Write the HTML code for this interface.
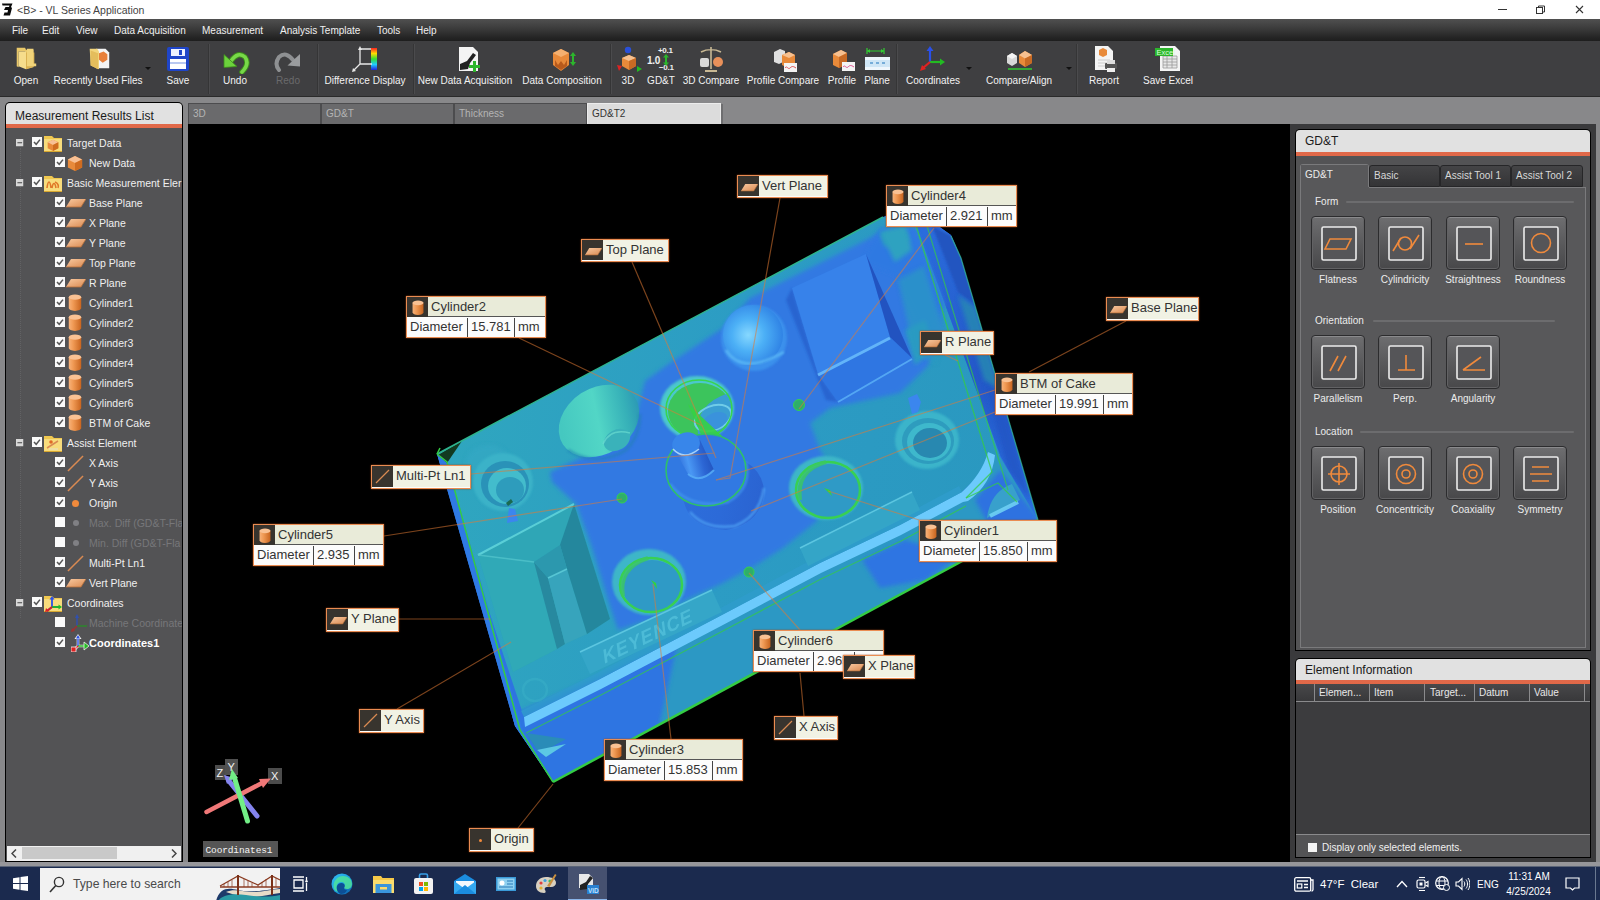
<!DOCTYPE html>
<html>
<head>
<meta charset="utf-8">
<title>VL Series Application</title>
<style>
*{box-sizing:border-box;margin:0;padding:0}
html,body{width:1600px;height:900px;overflow:hidden;background:#88888a;font-family:"Liberation Sans",sans-serif;}
.abs{position:absolute}
#titlebar{left:0;top:0;width:1600px;height:19px;background:#fff;color:#444;font-size:10.5px;line-height:20px;}
#menubar{left:0;top:19px;width:1600px;height:22px;background:linear-gradient(#505050 0%,#3a3a3a 45%,#242424 85%,#1e1e1e 100%);color:#f0f0f0;font-size:10px;line-height:24px;}
#menubar span{position:absolute;top:0;white-space:nowrap}
#toolbar{left:0;top:41px;width:1600px;height:56px;background:#3f3f41;border-bottom:1px solid #2a2a2a;}
.tb{position:absolute;top:33px;color:#f2f2f2;font-size:10px;white-space:nowrap;transform:translateX(-50%);line-height:13px;}
.tsep{position:absolute;top:3px;width:2px;height:50px;background:#353536;border-right:1px solid #4b4b4d;}
.ico{position:absolute;top:5px;width:26px;height:26px;}
/* panels */
.phead{background:#e1e1e1;border-bottom:4px solid #e8705a;border-image:linear-gradient(#f0a898,#e8745a 40%,#e06848) 1;color:#1a1a1a;font-size:12px;}
.trow{position:absolute;font-size:10.5px;line-height:14px;white-space:nowrap;}

.glab{font-size:10px;color:#ececec;white-space:nowrap;line-height:13px}
.gtab{position:absolute;background:linear-gradient(#444446,#343436);border:1px solid #262628;color:#d8d8d8;font-size:10px;line-height:20px;padding-left:4px;border-radius:3px 3px 0 0;white-space:nowrap}
.gtab.sel{background:#58585a;border:1px solid #7a7a7c;border-bottom:none;color:transparent}
.gbtn{position:absolute;width:54px;height:54px;border-radius:4px;background:linear-gradient(#6e6e70 0%,#5a5a5c 50%,#48484a 100%);border:1px solid #2c2c2e;box-shadow:inset 0 1px 0 #8a8a8c, inset 0 0 0 1px #626264}
.tkt{color:#fff;white-space:nowrap;line-height:13px}

.lb{position:absolute;border:1.800px solid #ea8c52;background:#fdfdfb;font-size:13px;color:#333;overflow:hidden;white-space:nowrap;box-shadow:0 0 1.500px #a04818}
.lbi{position:absolute;left:0;top:0;width:21px;background:#38342e}
.lbt{position:absolute;left:21px;top:0;right:0;background:#f1f2e4;padding-left:3px}
.lbr{position:absolute;left:0;top:21px;height:19px;line-height:18px;background:#fcfcfc}
.lbr span{position:absolute;top:0}
.lbr i{position:absolute;top:0;width:1px;height:19px;background:#444}
/* tabs */
.vtab{position:absolute;top:103px;height:21px;background:#6a6a6c;border:1px solid #4c4c4e;border-bottom:none;color:#b4b4b4;font-size:10px;line-height:20px;padding-left:4px;}
#viewport{left:188px;top:124px;width:1102px;height:738px;background:#000;overflow:hidden;}
/* taskbar */
#taskbar{left:0;top:866px;width:1600px;height:34px;background:#1b2a4e;border-top:1px solid #5a6478}
</style>
</head>
<body>

<svg width="0" height="0" style="position:absolute">
<defs>
<linearGradient id="gcyl" x1="0" y1="0" x2="1" y2="0"><stop offset="0" stop-color="#f7b27a"/><stop offset=".35" stop-color="#f09a55"/><stop offset="1" stop-color="#c8641e"/></linearGradient>
<linearGradient id="gpl" x1="0" y1="0" x2="1" y2="1"><stop offset="0" stop-color="#f9c9a0"/><stop offset="1" stop-color="#d98a52"/></linearGradient>
<symbol id="i-cyl" viewBox="0 0 18 20"><path d="M2 4v12c0 2 3 3.500 7 3.500s7-1.500 7-3.500V4z" fill="url(#gcyl)"/><ellipse cx="9" cy="4" rx="7" ry="3" fill="#f9c193"/></symbol>
<symbol id="i-plane" viewBox="0 0 20 10"><path d="M5 1h15l-5 8H0z" fill="url(#gpl)"/><path d="M0 9h15l5-8" stroke="#b8703a" stroke-width="0.8" fill="none"/></symbol>
<symbol id="i-line" viewBox="0 0 18 18"><path d="M1 17L17 1" stroke="#d98a52" stroke-width="1.600"/></symbol>
<symbol id="i-cube" viewBox="0 0 18 18"><path d="M1 5l8-4 8 4v9l-8 4-8-4z" fill="#e88a3a"/><path d="M1 5l8 4 8-4-8-4z" fill="#f8c094"/><path d="M9 9v9l8-4V5z" fill="#cf6c20"/></symbol>
<symbol id="i-folder" viewBox="0 0 20 20"><path d="M1 3h8l2 2h8v14H1z" fill="#f0c850"/><path d="M1 6h18v13H1z" fill="#f8dc7c"/><path d="M1 18h18v1H1z" fill="#d8a830"/></symbol>
<symbol id="i-check" viewBox="0 0 10 10"><rect x="0" y="0" width="10" height="10" fill="#fafafa"/><path d="M2 5l2.200 2.300L8 2.600" stroke="#555" stroke-width="1.500" fill="none"/></symbol>
<symbol id="i-uncheck" viewBox="0 0 10 10"><rect x="0" y="0" width="10" height="10" fill="#fafafa"/></symbol>
<symbol id="i-exp" viewBox="0 0 8 8"><rect x="0" y="0" width="8" height="8" fill="#d8d8d8"/><path d="M1.500 4h5" stroke="#444" stroke-width="1.200"/></symbol>
</defs>
</svg>
<!-- TITLE BAR -->
<div id="titlebar" class="abs"><svg class="abs" style="left:1px;top:2px;width:13px;height:15px" viewBox="0 0 13 15"><path d="M1 1.500h10.500L10 5 11 6 9 13.500H2.500L3.500 10.500H6.500L7 8H3L4.500 5 8 5 8.500 3.500H1.500z" fill="#0a0a0a"/></svg><span class="abs" style="left:17px;top:0">&lt;B&gt; - VL Series Application</span>
<svg class="abs" style="left:1496px;top:4px;width:90px;height:12px" viewBox="0 0 90 12"><path d="M2 5.500h9" stroke="#333" stroke-width="1"/><rect x="40.500" y="3.500" width="6" height="6" stroke="#333" stroke-width="1" fill="none"/><path d="M42.500 3.500v-1.500h6v6h-2" stroke="#333" stroke-width="1" fill="none"/><path d="M80 2l7 7M87 2l-7 7" stroke="#333" stroke-width="1.100"/></svg></div>
<!-- MENU BAR -->
<div id="menubar" class="abs">
<span style="left:12px">File</span><span style="left:42px">Edit</span><span style="left:76px">View</span><span style="left:114px">Data Acquisition</span><span style="left:202px">Measurement</span><span style="left:280px">Analysis Template</span><span style="left:377px">Tools</span><span style="left:416px">Help</span>
</div>
<!-- TOOLBAR -->
<div id="toolbar" class="abs">
<!-- Open -->
<svg class="ico" style="left:13px;top:4px" viewBox="0 0 26 28"><path d="M3 3h9l1 2h8v19l-8 2V8l-1-1H5v17l-2-1z" fill="#e9c86a"/><path d="M5 7h8v19l-8-3z" fill="#f6dd8c"/><path d="M13 8h9v15l-9 3z" fill="#d9b050"/><path d="M14 4h7v16h3v3h-10z" fill="#f1d47a"/></svg>
<div class="tb" style="left:26px">Open</div>
<!-- Recently used -->
<svg class="ico" style="left:86px;top:4px" viewBox="0 0 26 28"><path d="M10 4h10l4 4v17H10z" fill="#f4f4f4"/><path d="M13 9l5-2 4 3v6l-5 3-4-3z" fill="#e8803a"/><path d="M3 4h8l2 3v19l-9-4z" fill="#f2d57c"/><path d="M4 6l8 3v17l-8-4z" fill="#e4bd5c"/></svg>
<div class="tb" style="left:98px">Recently Used Files</div>
<div class="abs" style="left:145px;top:26px;width:0;height:0;border:3px solid transparent;border-top:3px solid #111;"></div>
<!-- Save -->
<svg class="ico" style="left:166px;top:5px;width:24px;height:26px" viewBox="0 0 24 26"><rect x="1" y="1" width="22" height="24" rx="2" fill="#1f45c8"/><rect x="5" y="3" width="14" height="7" fill="#eef2ff"/><rect x="13" y="4" width="3" height="5" fill="#1f45c8"/><rect x="4" y="13" width="16" height="10" fill="#ffffff"/><rect x="4" y="16" width="16" height="2" fill="#b9c8f0"/></svg>
<div class="tb" style="left:178px">Save</div>
<div class="tsep" style="left:208px"></div>
<!-- Undo -->
<svg class="abs" style="left:220px;top:9px;width:32px;height:24px" viewBox="220 50 32 24"><path d="M231 61Q238 51 245 57Q250 64 242 72" stroke="#3c8a1c" stroke-width="5.500" fill="none" stroke-linecap="round"/><path d="M231 61Q238 51 245 57Q250 64 242 72" stroke="#78d848" stroke-width="3.600" fill="none" stroke-linecap="round"/><path d="M224 54.500L224 67.500L237 66.500Z" fill="#6cd23c" stroke="#3c8a1c" stroke-width=".800"/></svg>
<div class="tb" style="left:235px">Undo</div>
<!-- Redo -->
<svg class="abs" style="left:272px;top:9px;width:32px;height:24px" viewBox="272 50 32 24"><path d="M293 60Q286 51 279 57Q274 64 279 70" stroke="#8e9092" stroke-width="4" fill="none" stroke-linecap="round"/><path d="M300 54L300 66.500L287.500 65.500Z" fill="#9a9c9e"/></svg>
<div class="tb" style="left:288px;color:#6a6a6c">Redo</div>
<div class="tsep" style="left:317px"></div>
<!-- Difference display -->
<svg class="ico" style="left:352px;top:5px;width:28px;height:28px" viewBox="0 0 28 28"><defs><linearGradient id="rb" x1="0" y1="0" x2="0" y2="1"><stop offset="0" stop-color="#f22"/><stop offset=".25" stop-color="#fd0"/><stop offset=".5" stop-color="#3d3"/><stop offset=".75" stop-color="#2cf"/><stop offset="1" stop-color="#22d"/></linearGradient></defs><rect x="19" y="2" width="6" height="22" fill="url(#rb)"/><path d="M8 3v15h12M8 18l-6 6M8 3h11" stroke="#e8e8e8" stroke-width="1.3" fill="none"/><path d="M8 0l-2 4h4zM0 26l1-4 3 3z" fill="#e8e8e8"/></svg>
<div class="tb" style="left:365px">Difference Display</div>
<div class="tsep" style="left:413px"></div>
<!-- New data acquisition -->
<svg class="ico" style="left:455px;top:5px;width:28px;height:28px" viewBox="0 0 28 28"><path d="M4 1h14l5 5v19H4z" fill="#f4f4f4"/><path d="M5 18l7-3 6-8 3 2-6 8-2 6-8 1z" fill="#222"/><path d="M17 17h4v-4h3v4h4v3h-4v4h-3v-4h-4z" fill="#2cb52c" transform="translate(-3,2)"/></svg>
<div class="tb" style="left:465px">New Data Acquisition</div>
<!-- Data composition -->
<svg class="ico" style="left:548px;top:5px;width:30px;height:28px" viewBox="0 0 30 28"><path d="M5 7l8-4 8 4v12l-8 6-8-6z" fill="#e88a3a"/><path d="M5 7l8 4 8-4-8-4z" fill="#f4b070"/><path d="M7 14l3 5 3-4 3 4 3-5v6l-6 4-6-4z" fill="#b85a1c"/><path d="M25 6l3 4h-2v6h2l-3 4-3-4h2v-6h-2z" fill="#2cb52c"/></svg>
<div class="tb" style="left:562px">Data Composition</div>
<div class="tsep" style="left:610px"></div>
<!-- 3D -->
<svg class="ico" style="left:615px;top:5px;width:28px;height:28px" viewBox="0 0 28 28"><path d="M7 12l7-3 7 3v8l-7 4-7-4z" fill="#e88a3a"/><path d="M7 12l7 3 7-3-7-3z" fill="#f6c090"/><path d="M14 15v9l7-4v-8z" fill="#c86a24"/><circle cx="13" cy="4" r="3.2" fill="#2a50d8"/><path d="M2 19l5 1-3 5z" fill="#d22"/><path d="M22 20l5 3-5 3z" fill="#2b2"/></svg>
<div class="tb" style="left:628px">3D</div>
<!-- GD&T -->
<div class="abs" style="left:647px;top:14px;color:#f0f0f0;font-size:10px;font-weight:bold;letter-spacing:-0.3px">1.0</div>
<div class="abs" style="left:658px;top:5px;color:#f0f0f0;font-size:8px;font-weight:bold;letter-spacing:-0.3px">+0.1</div>
<div class="abs" style="left:659px;top:22px;color:#f0f0f0;font-size:8px;font-weight:bold;letter-spacing:-0.3px">&minus;0.1</div>
<svg class="abs" style="left:662px;top:13px;width:8px;height:12px" viewBox="0 0 8 12"><path d="M4 0l3 3.5H5v5h2L4 12 1 8.500h2v-5H1z" fill="#2cb52c"/></svg>
<div class="tb" style="left:661px">GD&amp;T</div>
<!-- 3D Compare -->
<svg class="ico" style="left:697px;top:5px;width:28px;height:28px" viewBox="0 0 28 28"><path d="M14 1v22M4 6c6-3 14-3 20 0" stroke="#c8b894" stroke-width="1.6" fill="none"/><path d="M8 24h12v2H8z" fill="#c8b894"/><rect x="3" y="12" width="9" height="9" rx="2" fill="#d8d8d8"/><circle cx="21" cy="16" r="5" fill="#e8905a"/></svg>
<div class="tb" style="left:711px">3D Compare</div>
<!-- Profile Compare -->
<svg class="ico" style="left:771px;top:5px;width:28px;height:28px" viewBox="0 0 28 28"><path d="M3 6l6-3 5 2v10l-6 3-5-2z" fill="#e0e0e0"/><path d="M11 9l7-3 6 3v10l-7 3-6-3z" fill="#e88a3a"/><path d="M11 9l7 3 6-3-6-3z" fill="#f6c090"/><rect x="13" y="17" width="13" height="9" fill="#f4f4f4"/><path d="M14 22c2-3 3 2 5 0s3-2 6 0" stroke="#e05050" stroke-width="1" fill="none"/></svg>
<div class="tb" style="left:783px">Profile Compare</div>
<!-- Profile -->
<svg class="ico" style="left:829px;top:5px;width:28px;height:28px" viewBox="0 0 28 28"><path d="M4 8l8-4 6 3v11l-8 4-6-3z" fill="#e88a3a"/><path d="M4 8l6 3 8-4-6-3z" fill="#f6c090"/><path d="M10 11v11l8-4V7z" fill="#c86a24"/><rect x="13" y="16" width="13" height="9" fill="#f4f4f4"/><path d="M14 21c2-3 3 2 5 0s3-2 6 0" stroke="#e05090" stroke-width="1" fill="none"/></svg>
<div class="tb" style="left:842px">Profile</div>
<!-- Plane -->
<svg class="ico" style="left:864px;top:5px;width:28px;height:28px" viewBox="0 0 28 28"><path d="M3 2v6M20 2v6M3 5h17" stroke="#3c3" stroke-width="1.2" fill="none"/><path d="M3 5l3-2v4zM20 5l-3-2v4z" fill="#3c3"/><rect x="1" y="11" width="25" height="13" fill="#cfe6f6"/><rect x="1" y="11" width="25" height="3" fill="#eef6fc"/><rect x="1" y="21" width="25" height="3" fill="#eef6fc"/><path d="M6 17h3M12 17h3M18 17h3" stroke="#5a9ad0" stroke-width="1.5"/></svg>
<div class="tb" style="left:877px">Plane</div>
<div class="tsep" style="left:896px"></div>
<!-- Coordinates -->
<svg class="ico" style="left:918px;top:5px;width:28px;height:28px" viewBox="0 0 28 28"><path d="M12 4v12" stroke="#2a50e8" stroke-width="2.2"/><path d="M12 0l-3.500 5h7z" fill="#2a50e8"/><path d="M12 16h10" stroke="#2b2" stroke-width="2.2"/><path d="M27 16l-5-3.500v7z" fill="#2b2"/><path d="M12 16l-7 6" stroke="#d22" stroke-width="2.2"/><path d="M2 25l2-6 4 4z" fill="#d22"/></svg>
<div class="tb" style="left:933px">Coordinates</div>
<div class="abs" style="left:966px;top:26px;width:0;height:0;border:3px solid transparent;border-top:3px solid #111;"></div>
<!-- Compare/Align -->
<svg class="ico" style="left:1006px;top:8px;width:28px;height:24px" viewBox="0 0 28 24"><path d="M1 7l5-3 5 3v7l-5 3-5-3z" fill="#d8d8d8"/><path d="M1 7l5 3 5-3-5-3z" fill="#f4f4f4"/><path d="M13 6l6-4 7 4v8l-7 4-6-4z" fill="#e88a3a"/><path d="M13 6l6 3.500L26 6l-7-4z" fill="#f6c090"/><path d="M19 9.500V18l7-4V6z" fill="#c86a24"/><path d="M2 20h24" stroke="#3c3" stroke-width="1.5"/></svg>
<div class="tb" style="left:1019px">Compare/Align</div>
<div class="abs" style="left:1066px;top:26px;width:0;height:0;border:3px solid transparent;border-top:3px solid #111;"></div>
<div class="tsep" style="left:1076px"></div>
<!-- Report -->
<svg class="ico" style="left:1092px;top:4px;width:28px;height:28px" viewBox="0 0 28 28"><path d="M3 1h13l5 5v19H3z" fill="#f4f4f4"/><path d="M7 5l4-2 4 2v5l-4 2-4-2z" fill="#e88a3a"/><path d="M6 15h12M6 18h12M6 21h8" stroke="#ccc" stroke-width="1"/><rect x="13" y="18" width="12" height="6" rx="1" fill="#555"/><rect x="15" y="15" width="8" height="4" fill="#ddd"/><rect x="15" y="23" width="8" height="4" fill="#eee"/></svg>
<div class="tb" style="left:1104px">Report</div>
<!-- Save Excel -->
<svg class="ico" style="left:1154px;top:4px;width:30px;height:28px" viewBox="0 0 30 28"><path d="M6 1h15l5 5v20H6z" fill="#f4f4f4"/><path d="M9 11h14v12H9zM9 14h14M9 17h14M9 20h14M13 11v12M18 11v12" stroke="#999" stroke-width="0.8" fill="#e8e8e8"/><rect x="1" y="3" width="18" height="8" fill="#2cb52c"/><text x="2.500" y="10" font-size="7.500" font-family="Liberation Sans" fill="#d8ffd8">Excel</text></svg>
<div class="tb" style="left:1168px">Save Excel</div>
</div>
<!-- LEFT PANEL -->
<div id="leftpanel" class="abs" style="left:5px;top:102px;width:179px;height:762px;">
<div class="abs" style="left:0;top:0;width:178px;height:760px;background:#000;border-radius:5px 5px 0 0;"></div>
<div class="abs phead" style="left:1px;top:1px;width:176px;height:25px;border-radius:4px 4px 0 0;line-height:27px;padding-left:9px;">Measurement Results List</div>
<div class="abs" style="left:1px;top:26px;width:176px;height:733px;background:#535355;overflow:hidden">
<div class="abs" style="left:14px;top:20px;width:0;height:470px;border-left:1px dotted #626264"></div>
<div id="tree" class="abs" style="left:-1px;top:-25px;width:178px;height:760px;">
<svg class="abs" style="left:11px;top:36px;width:7.500px;height:7.500px"><use href="#i-exp"/></svg>
<svg class="abs" style="left:27px;top:34px;width:10px;height:10px"><use href="#i-check"/></svg>
<svg class="abs" style="left:38px;top:30px;width:20px;height:20px"><use href="#i-folder"/></svg>
<svg class="abs" style="left:42px;top:36px;width:12px;height:12px"><use href="#i-cube"/></svg>
<div class="trow" style="left:62px;top:33px;color:#f0f0f0;">Target Data</div>
<svg class="abs" style="left:50px;top:54px;width:10px;height:10px"><use href="#i-check"/></svg>
<svg class="abs" style="left:62px;top:52px;width:16px;height:16px"><use href="#i-cube"/></svg>
<div class="trow" style="left:84px;top:53px;color:#f0f0f0;">New Data</div>
<svg class="abs" style="left:11px;top:76px;width:7.500px;height:7.500px"><use href="#i-exp"/></svg>
<svg class="abs" style="left:27px;top:74px;width:10px;height:10px"><use href="#i-check"/></svg>
<svg class="abs" style="left:38px;top:70px;width:20px;height:20px"><use href="#i-folder"/></svg>
<svg class="abs" style="left:41px;top:76px;width:14px;height:11px" viewBox="0 0 14 11"><path d="M1 9c1-8 3-8 4 0M6 9c1-6 3-6 4 0M9 3c3 1 4 4 3 6" stroke="#e07828" stroke-width="1.600" fill="none"/></svg>
<div class="trow" style="left:62px;top:73px;color:#f0f0f0;">Basic Measurement Eler</div>
<svg class="abs" style="left:50px;top:94px;width:10px;height:10px"><use href="#i-check"/></svg>
<svg class="abs" style="left:61px;top:95px;width:20px;height:10px"><use href="#i-plane"/></svg>
<div class="trow" style="left:84px;top:93px;color:#f0f0f0;">Base Plane</div>
<svg class="abs" style="left:50px;top:114px;width:10px;height:10px"><use href="#i-check"/></svg>
<svg class="abs" style="left:61px;top:115px;width:20px;height:10px"><use href="#i-plane"/></svg>
<div class="trow" style="left:84px;top:113px;color:#f0f0f0;">X Plane</div>
<svg class="abs" style="left:50px;top:134px;width:10px;height:10px"><use href="#i-check"/></svg>
<svg class="abs" style="left:61px;top:135px;width:20px;height:10px"><use href="#i-plane"/></svg>
<div class="trow" style="left:84px;top:133px;color:#f0f0f0;">Y Plane</div>
<svg class="abs" style="left:50px;top:154px;width:10px;height:10px"><use href="#i-check"/></svg>
<svg class="abs" style="left:61px;top:155px;width:20px;height:10px"><use href="#i-plane"/></svg>
<div class="trow" style="left:84px;top:153px;color:#f0f0f0;">Top Plane</div>
<svg class="abs" style="left:50px;top:174px;width:10px;height:10px"><use href="#i-check"/></svg>
<svg class="abs" style="left:61px;top:175px;width:20px;height:10px"><use href="#i-plane"/></svg>
<div class="trow" style="left:84px;top:173px;color:#f0f0f0;">R Plane</div>
<svg class="abs" style="left:50px;top:194px;width:10px;height:10px"><use href="#i-check"/></svg>
<svg class="abs" style="left:62px;top:190px;width:16px;height:19px" preserveAspectRatio="none"><use href="#i-cyl" width="16" height="19" preserveAspectRatio="none"/></svg>
<div class="trow" style="left:84px;top:193px;color:#f0f0f0;">Cylinder1</div>
<svg class="abs" style="left:50px;top:214px;width:10px;height:10px"><use href="#i-check"/></svg>
<svg class="abs" style="left:62px;top:210px;width:16px;height:19px" preserveAspectRatio="none"><use href="#i-cyl" width="16" height="19" preserveAspectRatio="none"/></svg>
<div class="trow" style="left:84px;top:213px;color:#f0f0f0;">Cylinder2</div>
<svg class="abs" style="left:50px;top:234px;width:10px;height:10px"><use href="#i-check"/></svg>
<svg class="abs" style="left:62px;top:230px;width:16px;height:19px" preserveAspectRatio="none"><use href="#i-cyl" width="16" height="19" preserveAspectRatio="none"/></svg>
<div class="trow" style="left:84px;top:233px;color:#f0f0f0;">Cylinder3</div>
<svg class="abs" style="left:50px;top:254px;width:10px;height:10px"><use href="#i-check"/></svg>
<svg class="abs" style="left:62px;top:250px;width:16px;height:19px" preserveAspectRatio="none"><use href="#i-cyl" width="16" height="19" preserveAspectRatio="none"/></svg>
<div class="trow" style="left:84px;top:253px;color:#f0f0f0;">Cylinder4</div>
<svg class="abs" style="left:50px;top:274px;width:10px;height:10px"><use href="#i-check"/></svg>
<svg class="abs" style="left:62px;top:270px;width:16px;height:19px" preserveAspectRatio="none"><use href="#i-cyl" width="16" height="19" preserveAspectRatio="none"/></svg>
<div class="trow" style="left:84px;top:273px;color:#f0f0f0;">Cylinder5</div>
<svg class="abs" style="left:50px;top:294px;width:10px;height:10px"><use href="#i-check"/></svg>
<svg class="abs" style="left:62px;top:290px;width:16px;height:19px" preserveAspectRatio="none"><use href="#i-cyl" width="16" height="19" preserveAspectRatio="none"/></svg>
<div class="trow" style="left:84px;top:293px;color:#f0f0f0;">Cylinder6</div>
<svg class="abs" style="left:50px;top:314px;width:10px;height:10px"><use href="#i-check"/></svg>
<svg class="abs" style="left:62px;top:310px;width:16px;height:19px" preserveAspectRatio="none"><use href="#i-cyl" width="16" height="19" preserveAspectRatio="none"/></svg>
<div class="trow" style="left:84px;top:313px;color:#f0f0f0;">BTM of Cake</div>
<svg class="abs" style="left:11px;top:336px;width:7.500px;height:7.500px"><use href="#i-exp"/></svg>
<svg class="abs" style="left:27px;top:334px;width:10px;height:10px"><use href="#i-check"/></svg>
<svg class="abs" style="left:38px;top:330px;width:20px;height:20px"><use href="#i-folder"/></svg>
<svg class="abs" style="left:41px;top:335px;width:14px;height:12px" viewBox="0 0 14 12"><path d="M1 10L12 3" stroke="#d98a52" stroke-width="1.500"/><circle cx="5" cy="4" r="1.800" fill="#e06a28"/><path d="M3 11h9" stroke="#e8e0c0" stroke-width="1.200"/></svg>
<div class="trow" style="left:62px;top:333px;color:#f0f0f0;">Assist Element</div>
<svg class="abs" style="left:50px;top:354px;width:10px;height:10px"><use href="#i-check"/></svg>
<svg class="abs" style="left:62px;top:352px;width:17px;height:17px"><use href="#i-line"/></svg>
<div class="trow" style="left:84px;top:353px;color:#f0f0f0;">X Axis</div>
<svg class="abs" style="left:50px;top:374px;width:10px;height:10px"><use href="#i-check"/></svg>
<svg class="abs" style="left:62px;top:372px;width:17px;height:17px"><use href="#i-line"/></svg>
<div class="trow" style="left:84px;top:373px;color:#f0f0f0;">Y Axis</div>
<svg class="abs" style="left:50px;top:394px;width:10px;height:10px"><use href="#i-check"/></svg>
<div class="abs" style="left:67px;top:397px;width:7px;height:7px;border-radius:50%;background:#f08a3c"></div>
<div class="trow" style="left:84px;top:393px;color:#f0f0f0;">Origin</div>
<svg class="abs" style="left:50px;top:414px;width:10px;height:10px"><use href="#i-uncheck"/></svg>
<div class="abs" style="left:68px;top:417px;width:6px;height:6px;border-radius:50%;background:#808084"></div>
<div class="trow" style="left:84px;top:413px;color:#77777a;">Max. Diff (GD&amp;T-Fla</div>
<svg class="abs" style="left:50px;top:434px;width:10px;height:10px"><use href="#i-uncheck"/></svg>
<div class="abs" style="left:68px;top:437px;width:6px;height:6px;border-radius:50%;background:#808084"></div>
<div class="trow" style="left:84px;top:433px;color:#77777a;">Min. Diff (GD&amp;T-Fla</div>
<svg class="abs" style="left:50px;top:454px;width:10px;height:10px"><use href="#i-check"/></svg>
<svg class="abs" style="left:62px;top:452px;width:17px;height:17px"><use href="#i-line"/></svg>
<div class="trow" style="left:84px;top:453px;color:#f0f0f0;">Multi-Pt Ln1</div>
<svg class="abs" style="left:50px;top:474px;width:10px;height:10px"><use href="#i-check"/></svg>
<svg class="abs" style="left:61px;top:475px;width:20px;height:10px"><use href="#i-plane"/></svg>
<div class="trow" style="left:84px;top:473px;color:#f0f0f0;">Vert Plane</div>
<svg class="abs" style="left:11px;top:496px;width:7.500px;height:7.500px"><use href="#i-exp"/></svg>
<svg class="abs" style="left:27px;top:494px;width:10px;height:10px"><use href="#i-check"/></svg>
<svg class="abs" style="left:38px;top:490px;width:20px;height:20px"><use href="#i-folder"/></svg>
<svg class="abs" style="left:40px;top:493px;width:17px;height:16px" viewBox="0 0 17 16"><path d="M7 2v9h8M7 11l-5 4" stroke-width="1.800" fill="none" stroke="#2a50e8"/><path d="M7 11h8" stroke="#2b2" stroke-width="1.800"/><path d="M7 11l-5 4" stroke="#d22" stroke-width="1.800"/><path d="M7 0l-2.500 3.500h5z" fill="#2a50e8"/><path d="M17 11l-3.500-2.500v5z" fill="#2b2"/><path d="M0 16l1-4 3 3z" fill="#d22"/></svg>
<div class="trow" style="left:62px;top:493px;color:#f0f0f0;">Coordinates</div>
<svg class="abs" style="left:50px;top:514px;width:10px;height:10px"><use href="#i-uncheck"/></svg>
<svg class="abs" style="left:66px;top:511px;width:18px;height:18px" viewBox="0 0 18 18"><path d="M6 2v10" stroke="#3050b0" stroke-width="1.400"/><path d="M6 0L4 4h4z" fill="#3050b0"/><path d="M6 12h10" stroke="#2a8a2a" stroke-width="1.400"/><path d="M6 12l-4 4" stroke="#a03030" stroke-width="1.400"/><path d="M0 18l1-4 3 3z" fill="#a03030"/></svg>
<div class="trow" style="left:84px;top:513px;color:#77777a;">Machine Coordinate</div>
<svg class="abs" style="left:50px;top:534px;width:10px;height:10px"><use href="#i-check"/></svg>
<svg class="abs" style="left:66px;top:531px;width:19px;height:18px" viewBox="0 0 19 18"><path d="M7 4v8h6M7 12l-4 4" stroke="#f0f0f0" stroke-width="2.600" fill="none"/><path d="M7 0L3.500 5h7z" fill="#f0f0f0"/><path d="M7 5v7" stroke="#2a50e8" stroke-width="1.400"/><path d="M7 1L5 4.500h4z" fill="#2a50e8"/><path d="M7 12h7" stroke="#2b2" stroke-width="1.400"/><path d="M18 12l-5-4v8z" fill="#2b2" stroke="#f0f0f0" stroke-width="0.800"/><path d="M7 12l-4 4" stroke="#d22" stroke-width="1.400"/><rect x="0" y="13" width="5" height="5" fill="#d22" stroke="#f0f0f0" stroke-width="0.800"/></svg>
<div class="trow" style="left:84px;top:533px;color:#ffffff;font-weight:bold;font-size:11px">Coordinates1</div>
</div>
<div class="abs" style="left:1px;top:718px;width:174px;height:15px;background:#f0f0f0;">
<div class="abs" style="left:15px;top:1px;width:95px;height:12px;background:#c9c9c9"></div>
<svg class="abs" style="left:4px;top:3px;width:6px;height:9px" viewBox="0 0 6 9"><path d="M5 0.500L1 4.500l4 4" stroke="#444" stroke-width="1.500" fill="none"/></svg>
<svg class="abs" style="left:164px;top:3px;width:6px;height:9px" viewBox="0 0 6 9"><path d="M1 0.500l4 4-4 4" stroke="#444" stroke-width="1.500" fill="none"/></svg>
</div>
</div>
</div>
<!-- VIEW TABS -->
<div class="vtab" style="left:188px;width:133px">3D</div>
<div class="vtab" style="left:321px;width:133px">GD&amp;T</div>
<div class="vtab" style="left:454px;width:133px">Thickness</div>
<div class="vtab" style="left:587px;width:134px;background:#dcdcdc;color:#333;border-color:#ececec;height:22px">GD&amp;T2</div><div class="abs" style="left:721px;top:104px;width:2px;height:20px;background:#6e6e70"></div>

<!-- VIEWPORT -->
<div id="viewport" class="abs"><!--MODEL--><svg class="abs" style="left:0;top:0;width:1102px;height:738px" viewBox="188 124 1102 738">
<defs>
<linearGradient id="mTop" gradientUnits="userSpaceOnUse" x1="450" y1="450" x2="1000" y2="520"><stop offset="0" stop-color="#2fa6bf"/><stop offset=".5" stop-color="#2c9cc4"/><stop offset="1" stop-color="#2a98c0"/></linearGradient>
<radialGradient id="mCone" cx=".45" cy=".35" r=".7"><stop offset="0" stop-color="#5ad8c4"/><stop offset=".6" stop-color="#38b8b4"/><stop offset="1" stop-color="#2a9cb8"/></radialGradient>
<radialGradient id="mDome" cx=".42" cy=".5" r=".6"><stop offset="0" stop-color="#86d8ff"/><stop offset=".45" stop-color="#4cb0f6"/><stop offset="1" stop-color="#2e80e4"/></radialGradient>
<linearGradient id="mPin" x1="0" y1="0" x2="1" y2="0"><stop offset="0" stop-color="#2a66d4"/><stop offset=".5" stop-color="#3c8cf0"/><stop offset="1" stop-color="#2458c4"/></linearGradient>
<linearGradient id="mRight" gradientUnits="userSpaceOnUse" x1="930" y1="230" x2="1030" y2="520"><stop offset="0" stop-color="#2a6cdc"/><stop offset=".5" stop-color="#2458c8"/><stop offset="1" stop-color="#2c70e0"/></linearGradient>
<filter id="bl2"><feGaussianBlur stdDeviation="2"/></filter>
<filter id="bl4"><feGaussianBlur stdDeviation="4"/></filter>
<filter id="bl1"><feGaussianBlur stdDeviation="0.8"/></filter>
<clipPath id="cTop"><path d="M437 454L883 217L915 222L1028 505L500 712Z"/></clipPath>
<clipPath id="cSil"><path d="M437 454L883 217Q905 206 930 220L951 235L961 258L1038 520L553 782L515 726Z"/></clipPath>
</defs>
<!-- silhouette -->
<path d="M437 454L883 217Q905 206 930 220L951 235L961 258L1038 520L553 782L515 726Z" fill="#2e74e0"/>
<g clip-path="url(#cSil)">
<!-- top face base teal -->
<path d="M437 454L883 217L915 222L1000 455L962 492L900 525L820 563L720 616L600 679L524 717Z" fill="url(#mTop)"/>
<!-- right face -->
<path d="M915 222L930 220L951 235L961 258L1038 520L1000 455Z" fill="url(#mRight)"/>
<path d="M932 226L951 236L961 258L975 305L958 292L944 256Z" fill="#2354c0" filter="url(#bl1)"/><path d="M958 295L976 308L1000 390L984 380Z" fill="#2888b2" opacity=".85" filter="url(#bl2)"/><path d="M985 385L1002 395L1030 500L1008 470Z" fill="#2355c4" opacity=".8" filter="url(#bl2)"/>
<!-- central blue blobs -->
<g filter="url(#bl2)">
<path d="M550 472 583 457 623 435 638 408 645 381 670 363 697 345 723 328 750 298 800 273 860 243 885 230 915 230 925 270 940 300 943 333 927 367 900 393 863 401 830 408 810 423 820 450 830 467 823 493 817 521 783 548 751 568 723 583 683 601 657 617 618 630 608 600 592 548 576 504 552 482Z" fill="#3079e2"/>
</g>
<g filter="url(#bl2)"><path d="M862 262L880 228L916 228L945 305L925 335L895 275Z" fill="#2f79e2"/><path d="M880 233L906 230L910 242L884 246Z" fill="#2c98c0"/></g>
<!-- front face -->
<path d="M524 717L600 679L720 616L820 563L900 525L962 492Q990 478 996 450L1038 520L553 782L515 726Z" fill="#2c98c4"/>
<g filter="url(#bl2)">
<path d="M510 716L600 676L678 640L655 745L553 790L505 730Z" fill="#2d74e2"/>
<path d="M862 560L905 540L960 556L925 580L880 588Z" fill="#2d74e2"/>
<path d="M975 500L1000 470L1040 520L1000 545Z" fill="#2d72e0"/>
</g>
<!-- ledge -->
<path d="M524 717L600 679L720 616L820 563L900 525L962 492Q982 474 988 452L995 455Q992 484 968 501L963 502L901 535L821 573L721 626L601 689L525 727Z" fill="#6ccafc"/>
<path d="M521 711L597 673L717 610L817 557L897 519L959 486L962 492L900 525L820 563L720 616L600 679L524 717Z" fill="#2f9ccc" opacity=".8"/>
</g>

<g clip-path="url(#cSil)">
<!-- teal splotches -->
<g filter="url(#bl2)"><path d="M880 232L905 226L912 250L895 262Z" fill="#2ea2c0"/><path d="M905 330L925 320L935 350L915 365Z" fill="#2c9cc2"/></g>
<!-- counterbore left -->
<ellipse cx="488" cy="462" rx="22" ry="17" fill="#34a8c4" opacity=".7" filter="url(#bl2)"/>
<ellipse cx="503" cy="482" rx="30" ry="29" fill="#3ab2c8" filter="url(#bl1)"/>
<ellipse cx="505" cy="484" rx="24" ry="23" fill="#2a92b8"/>
<ellipse cx="507" cy="486" rx="19" ry="18" fill="#43bccc"/>
<ellipse cx="510" cy="490" rx="14" ry="13" fill="#2e9cbc"/>
<path d="M506 503l5-4 2 3-5 4z" fill="#1a6a50"/>
<path d="M509 508l6 1 3 12-11 2z" fill="#3b86ee"/>
<!-- cone -->
<defs><linearGradient id="mCone2" gradientUnits="userSpaceOnUse" x1="562" y1="410" x2="640" y2="440"><stop offset="0" stop-color="#45c8c0"/><stop offset=".45" stop-color="#52d6c6"/><stop offset=".8" stop-color="#36b0b8"/><stop offset="1" stop-color="#2a94b4"/></linearGradient></defs>
<ellipse cx="599" cy="421" rx="43" ry="33" transform="rotate(-33 599 421)" fill="url(#mCone2)"/>
<path d="M568 450Q596 468 626 450Q640 436 640 414" stroke="#2480b4" stroke-width="3" fill="none" opacity=".55" filter="url(#bl1)"/>
<ellipse cx="617" cy="440" rx="14" ry="10" transform="rotate(-30 617 440)" fill="#3ab2ba"/>
<path d="M603 444Q610 428 630 433" stroke="#6adcd0" stroke-width="1.500" fill="none" opacity=".7"/>
<!-- dome -->
<circle cx="754" cy="338" r="33" fill="#3a90ec" filter="url(#bl1)"/>
<circle cx="753" cy="335" r="30" fill="url(#mDome)"/>
<path d="M726 350Q742 376 784 352" stroke="#62c0f8" stroke-width="2.500" fill="none" opacity=".8" filter="url(#bl1)"/>
<path d="M898 280L924 266L944 330L936 364L914 352Z" fill="#2c9ac2" opacity=".7" filter="url(#bl2)"/>
<!-- square block -->
<path d="M786 300L792 288L818 374L838 402L826 400Z" fill="#2860cc" opacity=".8" filter="url(#bl1)"/>
<path d="M792 288L866 254L890 337L818 374Z" fill="#3782ea"/>
<path d="M818 374L890 337L912 358L838 402Z" fill="#2f76e2"/>
<path d="M866 254L912 358L890 337Z" fill="#2253c0"/>
<path d="M818 375L890 338" stroke="#66b8fa" stroke-width="3" opacity=".95"/>
<path d="M838 402L912 359" stroke="#58acf6" stroke-width="2" opacity=".9"/>
<!-- cylinder 2 recess -->
<ellipse cx="697" cy="408" rx="37" ry="32" fill="#4cc8cc" filter="url(#bl1)"/>
<ellipse cx="700" cy="411" rx="32" ry="28" fill="#3cc45c"/>
<path d="M698 436Q694 404 729 393Q737 410 727 426Q712 438 698 436Z" fill="#3a9cd8" opacity=".95"/>
<ellipse cx="713" cy="418" rx="19" ry="12" transform="rotate(-22 713 418)" fill="none" stroke="#70cce8" stroke-width="2"/>
<ellipse cx="715" cy="421" rx="13" ry="8" transform="rotate(-22 715 421)" fill="#3a92dc"/>
<ellipse cx="699" cy="409" rx="33" ry="29" fill="none" stroke="#38d450" stroke-width="1.600"/>
<path d="M688 404L722 436L702 437Z" fill="#36d242" opacity=".9"/>
<!-- big cylinder (BTM of cake) -->
<defs><linearGradient id="mBody" gradientUnits="userSpaceOnUse" x1="670" y1="480" x2="770" y2="500"><stop offset="0" stop-color="#2d6fdc"/><stop offset=".55" stop-color="#2c6ad8"/><stop offset="1" stop-color="#2a62d0"/></linearGradient></defs>
<path d="M667 478L684 502Q690 528 726 530Q762 524 764 490L745 462Z" fill="url(#mBody)"/>
<ellipse cx="724" cy="492" rx="40" ry="36" fill="url(#mBody)"/>
<path d="M690 512Q705 530 735 526Q760 516 764 488" stroke="#52a8f8" stroke-width="2.500" fill="none" opacity=".75" filter="url(#bl1)"/>
<ellipse cx="706" cy="470" rx="40" ry="36" fill="#3179e2"/>
<path d="M670 484Q690 510 728 502Q752 488 746 462" stroke="#4aa4f4" stroke-width="2.500" fill="none" opacity=".6" filter="url(#bl1)"/>
<ellipse cx="706" cy="470" rx="40" ry="36" fill="none" stroke="#2fc06a" stroke-width="1.600"/>
<!-- pin -->
<defs><linearGradient id="mPin2" gradientUnits="userSpaceOnUse" x1="676" y1="462" x2="714" y2="452"><stop offset="0" stop-color="#2c68d6"/><stop offset=".3" stop-color="#4a98f4"/><stop offset=".65" stop-color="#2c66d4"/><stop offset="1" stop-color="#1f4eb8"/></linearGradient></defs>
<path d="M673 447L688 474Q700 484 714 470L700 440Z" fill="url(#mPin2)"/>
<path d="M688 474Q700 484 714 470" stroke="#5ab0f8" stroke-width="2" fill="none" opacity=".8"/>
<ellipse cx="686" cy="444" rx="14" ry="11.500" transform="rotate(-15 686 444)" fill="#3886ea"/>
<path d="M673 449Q684 461 699 449" stroke="#b4dafc" stroke-width="1.600" fill="none" opacity=".9"/>
<!-- cylinder1 ring -->
<ellipse cx="826" cy="488" rx="37" ry="32" fill="#3cb6c8" filter="url(#bl1)"/>
<ellipse cx="829" cy="491" rx="31" ry="27" fill="#2f9ac6"/>
<ellipse cx="828" cy="490" rx="32" ry="28" fill="none" stroke="#38d052" stroke-width="2.500"/>
<path d="M800 500Q796 470 826 462" stroke="#3cc860" stroke-width="4" fill="none" opacity=".8"/>
<path d="M824 488l6 2 2 6z" fill="#34d040"/>
<!-- cylinder3 ring -->
<ellipse cx="649" cy="582" rx="37" ry="33" fill="#3cb6c8" filter="url(#bl1)"/>
<ellipse cx="652" cy="586" rx="30" ry="26" fill="#2f9ac6"/>
<ellipse cx="651" cy="585" rx="31" ry="27" fill="none" stroke="#38d052" stroke-width="2.500"/>
<path d="M623 596Q618 568 648 558" stroke="#3cc860" stroke-width="4" fill="none" opacity=".8"/>
<path d="M651 580l5 3 1 6z" fill="#34d040"/>
<!-- small holes -->
<circle cx="622" cy="498" r="5" fill="#2fae6a"/><circle cx="622" cy="498" r="5" fill="none" stroke="#36d050" stroke-width="1"/>
<circle cx="799" cy="405" r="5.500" fill="#2fae6a"/><circle cx="799" cy="405" r="5.500" fill="none" stroke="#36d050" stroke-width="1"/>
<circle cx="749" cy="572" r="5" fill="#2fae6a"/><circle cx="749" cy="572" r="5" fill="none" stroke="#36d050" stroke-width="1"/>
<!-- counterbore right -->
<ellipse cx="927" cy="440" rx="32" ry="29" fill="#3ab4ca" filter="url(#bl1)"/>
<ellipse cx="928" cy="441" rx="26" ry="23" fill="#2e9cbe"/>
<ellipse cx="929" cy="442" rx="22" ry="19" fill="#3eb8cc"/>
<ellipse cx="930" cy="443" rx="17" ry="15" fill="#2888b0"/>
<path d="M908 398l9-4 4 8-3 10-6 2z" fill="#3b86ee"/>
<!-- V-block -->
<path d="M478 555L574 504L610 619L587 634L565 644L557 649L513 672Z" fill="#2ea5b5"/>
<path d="M478 555L534 562L557 649L513 672Z" fill="#30a9b7"/>
<path d="M478 555L574 504L560 545L534 562Z" fill="#2fa6b6"/>
<path d="M534 562L548 578L565 644L557 649Z" fill="#27899f"/>
<path d="M548 578L567 569L587 634L565 644Z" fill="#37a4bc"/>
<path d="M560 545L574 504L610 619L587 634L567 569Z" fill="#24879d"/>
<path d="M534 562L560 545L567 569L548 578Z" fill="#2c98ae"/>
<path d="M478 555L574 504" stroke="#62d6dc" stroke-width="2" opacity=".85"/>
<path d="M478 555L534 562" stroke="#52c4cc" stroke-width="1.500" opacity=".8"/>
<path d="M548 578L567 569" stroke="#62d0dc" stroke-width="1.500" opacity=".8"/>
<ellipse cx="535" cy="690" rx="12" ry="11" fill="none" stroke="#3ab0c8" stroke-width="2.500" opacity=".5"/>
<!-- KEYENCE plate -->
<path d="M580 652L712 590L722 612L590 674Z" fill="#35a6c8"/>
<path d="M580 652L712 590" stroke="#5cc6e0" stroke-width="1.500"/>
<text x="0" y="0" font-family="Liberation Sans" font-size="19" font-weight="bold" fill="#55c2dc" opacity=".75" transform="translate(604 664) rotate(-25.500) skewX(-18)" textLength="98">KEYENCE</text>
<!-- right plate -->
<path d="M800 548L912 492L920 510L808 566Z" fill="#35a6c8" opacity=".9"/>
<path d="M800 548L912 492" stroke="#5cc6e0" stroke-width="1.500"/>
<!-- notch on front face -->
<path d="M526 733L566 739L550 748L537 750Z" fill="#2a8cb8"/>
<path d="M537 750L566 744L546 757Z" fill="#5cc8e4"/>
<path d="M987 518Q990 492 1012 484L1020 500Z" fill="#3aa8c8" opacity=".85"/>
<path d="M990 516L1018 502" stroke="#6ed0f4" stroke-width="4" opacity=".9"/>
</g>
<path d="M437 454L446 458L522 728L553 782L515 726Z" fill="#2f7ae4"/>
<path d="M438 455L462 441L447 463Z" fill="#123a20"/>
<!-- green bbox lines -->
<g stroke="#34cc44" stroke-width="1.500" fill="none">
<path d="M437 454L883 217" stroke="#2eb48c"/>
<path d="M437 454L447 462L520 730L553 782"/>
<path d="M440 448L437 454"/>
<path d="M553 782L1038 520" stroke-width="2.500"/>
<path d="M915 222L992 472L966 498" stroke-width="1.300" opacity=".75"/><path d="M526 733L601 695L721 632L821 579L901 541L966 506" stroke-width="1.300" opacity=".7"/>
<path d="M927 226L1008 490" stroke-width="1.200" opacity=".7"/><path d="M951 236L961 258L1038 520" stroke="#30b890" stroke-width="1.300" opacity=".7"/>
<path d="M966 498L998 483L1017 502" stroke-width="1.200" opacity=".75"/>

</g>
</svg>
<!--/MODEL--><!--LABELS--><svg class="abs" style="left:0;top:0;width:1102px;height:738px" viewBox="188 124 1102 738"><g stroke="#e07a34" stroke-width="1.200" opacity=".55" fill="none"><path d="M780 198L730 478L716 480"/><path d="M632 262L716 458"/><path d="M1126 321L1029 372"/><path d="M945 355L958 361"/><path d="M471 474L715 453"/><path d="M995 390L716 480"/><path d="M399 619L490 619"/><path d="M397 709L511 642"/><path d="M804 716L800 673"/><path d="M518 828L553 784"/><path d="M519 338L703 426"/><path d="M934 228L799 409"/><path d="M995 412L751 511"/><path d="M919 520L828 491"/><path d="M384 536L622 499"/><path d="M800 630L749 573"/><path d="M671 739L653 584"/></g></svg>
<div class="lb" style="left:549px;top:51px;width:91px;height:23px"><div class="lbi" style="height:20px"><svg class="abs" style="left:3px;top:7px;width:17px;height:9px"><use href="#i-plane"/></svg></div><div class="lbt" style="height:20px;line-height:19px">Vert Plane</div></div>
<div class="lb" style="left:393px;top:115px;width:88px;height:23px"><div class="lbi" style="height:20px"><svg class="abs" style="left:3px;top:7px;width:17px;height:9px"><use href="#i-plane"/></svg></div><div class="lbt" style="height:20px;line-height:19px">Top Plane</div></div>
<div class="lb" style="left:918px;top:173px;width:93px;height:24px"><div class="lbi" style="height:21px"><svg class="abs" style="left:3px;top:7px;width:17px;height:9px"><use href="#i-plane"/></svg></div><div class="lbt" style="height:21px;line-height:20px">Base Plane</div></div>
<div class="lb" style="left:732px;top:207px;width:74px;height:24px"><div class="lbi" style="height:21px"><svg class="abs" style="left:3px;top:7px;width:17px;height:9px"><use href="#i-plane"/></svg></div><div class="lbt" style="height:21px;line-height:20px">R Plane</div></div>
<div class="lb" style="left:183px;top:341px;width:100px;height:24px"><div class="lbi" style="height:21px"><svg class="abs" style="left:3px;top:3px;width:15px;height:15px" viewBox="0 0 15 15"><path d="M1 14L14 1" stroke="#d98a52" stroke-width="1.300"/></svg></div><div class="lbt" style="height:21px;line-height:20px">Multi-Pt Ln1</div></div>
<div class="lb" style="left:138px;top:484px;width:73px;height:24px"><div class="lbi" style="height:21px"><svg class="abs" style="left:3px;top:7px;width:17px;height:9px"><use href="#i-plane"/></svg></div><div class="lbt" style="height:21px;line-height:20px">Y Plane</div></div>
<div class="lb" style="left:171px;top:585px;width:65px;height:24px"><div class="lbi" style="height:21px"><svg class="abs" style="left:3px;top:3px;width:15px;height:15px" viewBox="0 0 15 15"><path d="M1 14L14 1" stroke="#d98a52" stroke-width="1.300"/></svg></div><div class="lbt" style="height:21px;line-height:20px">Y Axis</div></div>
<div class="lb" style="left:586px;top:592px;width:64px;height:24px"><div class="lbi" style="height:21px"><svg class="abs" style="left:3px;top:3px;width:15px;height:15px" viewBox="0 0 15 15"><path d="M1 14L14 1" stroke="#d98a52" stroke-width="1.300"/></svg></div><div class="lbt" style="height:21px;line-height:20px">X Axis</div></div>
<div class="lb" style="left:281px;top:704px;width:65px;height:24px"><div class="lbi" style="height:21px"><div class="abs" style="left:9px;top:10px;width:3px;height:3px;border-radius:50%;background:#f08a3c"></div></div><div class="lbt" style="height:21px;line-height:20px">Origin</div></div>
<div class="lb" style="left:698px;top:61px;width:131px;height:42px"><div class="lbi" style="height:20px"><svg class="abs" style="left:4px;top:2px;width:14px;height:17px"><use href="#i-cyl" width="14" height="17" preserveAspectRatio="none"/></svg></div><div class="lbt" style="height:20px;line-height:19px;background:#e9ebd9;border-bottom:1px solid #555">Cylinder4</div><div class="lbr" style="width:128px"><span style="left:3px">Diameter</span><i style="left:59px"></i><span style="left:63px">2.921</span><i style="left:100px"></i><span style="left:104px">mm</span></div></div>
<div class="lb" style="left:218px;top:172px;width:140px;height:42px"><div class="lbi" style="height:20px"><svg class="abs" style="left:4px;top:2px;width:14px;height:17px"><use href="#i-cyl" width="14" height="17" preserveAspectRatio="none"/></svg></div><div class="lbt" style="height:20px;line-height:19px;background:#e9ebd9;border-bottom:1px solid #555">Cylinder2</div><div class="lbr" style="width:137px"><span style="left:3px">Diameter</span><i style="left:60px"></i><span style="left:64px">15.781</span><i style="left:107px"></i><span style="left:111px">mm</span></div></div>
<div class="lb" style="left:807px;top:249px;width:138px;height:42px"><div class="lbi" style="height:20px"><svg class="abs" style="left:4px;top:2px;width:14px;height:17px"><use href="#i-cyl" width="14" height="17" preserveAspectRatio="none"/></svg></div><div class="lbt" style="height:20px;line-height:19px;background:#e9ebd9;border-bottom:1px solid #555">BTM of Cake</div><div class="lbr" style="width:135px"><span style="left:3px">Diameter</span><i style="left:59px"></i><span style="left:63px">19.991</span><i style="left:107px"></i><span style="left:111px">mm</span></div></div>
<div class="lb" style="left:731px;top:396px;width:138px;height:42px"><div class="lbi" style="height:20px"><svg class="abs" style="left:4px;top:2px;width:14px;height:17px"><use href="#i-cyl" width="14" height="17" preserveAspectRatio="none"/></svg></div><div class="lbt" style="height:20px;line-height:19px;background:#e9ebd9;border-bottom:1px solid #555">Cylinder1</div><div class="lbr" style="width:135px"><span style="left:3px">Diameter</span><i style="left:59px"></i><span style="left:63px">15.850</span><i style="left:107px"></i><span style="left:111px">mm</span></div></div>
<div class="lb" style="left:65px;top:400px;width:131px;height:42px"><div class="lbi" style="height:20px"><svg class="abs" style="left:4px;top:2px;width:14px;height:17px"><use href="#i-cyl" width="14" height="17" preserveAspectRatio="none"/></svg></div><div class="lbt" style="height:20px;line-height:19px;background:#e9ebd9;border-bottom:1px solid #555">Cylinder5</div><div class="lbr" style="width:128px"><span style="left:3px">Diameter</span><i style="left:59px"></i><span style="left:63px">2.935</span><i style="left:100px"></i><span style="left:104px">mm</span></div></div>
<div class="lb" style="left:565px;top:506px;width:131px;height:42px"><div class="lbi" style="height:20px"><svg class="abs" style="left:4px;top:2px;width:14px;height:17px"><use href="#i-cyl" width="14" height="17" preserveAspectRatio="none"/></svg></div><div class="lbt" style="height:20px;line-height:19px;background:#e9ebd9;border-bottom:1px solid #555">Cylinder6</div><div class="lbr" style="width:128px"><span style="left:3px">Diameter</span><i style="left:59px"></i><span style="left:63px">2.965</span><i style="left:100px"></i><span style="left:104px">mm</span></div></div>
<div class="lb" style="left:416px;top:615px;width:139px;height:42px"><div class="lbi" style="height:20px"><svg class="abs" style="left:4px;top:2px;width:14px;height:17px"><use href="#i-cyl" width="14" height="17" preserveAspectRatio="none"/></svg></div><div class="lbt" style="height:20px;line-height:19px;background:#e9ebd9;border-bottom:1px solid #555">Cylinder3</div><div class="lbr" style="width:136px"><span style="left:3px">Diameter</span><i style="left:59px"></i><span style="left:63px">15.853</span><i style="left:107px"></i><span style="left:111px">mm</span></div></div>
<div class="lb" style="left:655px;top:531px;width:72px;height:24px"><div class="lbi" style="height:21px"><svg class="abs" style="left:3px;top:7px;width:17px;height:9px"><use href="#i-plane"/></svg></div><div class="lbt" style="height:21px;line-height:20px">X Plane</div></div>
<svg class="abs" style="left:0;top:0;width:1102px;height:738px" viewBox="188 124 1102 738">
<rect x="215" y="765" width="11" height="15" fill="#4c4c4c"/><rect x="225" y="759" width="13" height="16" fill="#505050"/><rect x="268" y="768" width="14" height="16" fill="#4c4c4c"/>
<text x="216.500" y="777" font-family="Liberation Sans" font-size="11" fill="#f4f4f4">Z</text>
<text x="227.500" y="771" font-family="Liberation Sans" font-size="11" fill="#f4f4f4">Y</text>
<text x="271" y="780" font-family="Liberation Sans" font-size="11" fill="#f4f4f4">X</text>
<path d="M257 816L229 781" stroke="#8484ee" stroke-width="5" stroke-linecap="round"/><path d="M224 775l10 3-7 6z" fill="#8484ee"/>
<path d="M206.500 812L262 783" stroke="#f07878" stroke-width="4.500" stroke-linecap="round"/><path d="M271 778.500l-12 0.500 4 9z" fill="#f07878"/>
<path d="M247.500 821L234.500 778" stroke="#72ee86" stroke-width="5" stroke-linecap="round"/><path d="M232 769l-3 11 9-2z" fill="#72ee86"/>
<rect x="203" y="841" width="75" height="16" fill="#555"/>
<text x="205.500" y="853" font-family="Liberation Mono" font-size="9.500" fill="#f4f4f4" textLength="67">Coordinates1</text>
</svg>
<!--/LABELS--></div>
<!-- RIGHT PANEL -->
<div id="rightpanel" class="abs" style="left:1290px;top:124px;width:306px;height:738px;background:#3a3a3c"><div class="abs" style="left:5px;top:5px;width:296px;height:522px;background:#000;border-radius:5px 5px 0 0"></div>
<div class="abs phead" style="left:6px;top:6px;width:294px;height:26px;border-radius:4px 4px 0 0;line-height:22px;padding-left:9px">GD&amp;T</div>
<div class="abs" style="left:6px;top:32px;width:294px;height:494px;background:#535355"></div>
<div class="gtab sel" style="left:10px;top:40px;width:69px;height:24px">GD&amp;T</div>
<div class="gtab" style="left:79px;top:41px;width:71px;height:22px">Basic</div>
<div class="gtab" style="left:150px;top:41px;width:71px;height:22px">Assist Tool 1</div>
<div class="gtab" style="left:221px;top:41px;width:72px;height:22px">Assist Tool 2</div>
<div class="abs" style="left:10px;top:63px;width:286px;height:461px;border:1px solid #7a7a7c;border-top:none;background:#58585a"></div>
<div class="abs" style="left:79px;top:63px;width:217px;height:1px;background:#7a7a7c"></div>
<div class="abs" style="left:11px;top:41px;width:67px;height:24px;background:#58585a"></div>
<div class="abs glab" style="left:15px;top:44px;">GD&amp;T</div>
<div class="abs glab" style="left:25px;top:71px;">Form</div>
<div class="abs" style="left:56px;top:77px;width:228px;height:2px;background:#6c6c6e;border-radius:1px"></div>
<div class="abs glab" style="left:25px;top:190px;">Orientation</div>
<div class="abs" style="left:83px;top:196px;width:182px;height:2px;background:#6c6c6e;border-radius:1px"></div>
<div class="abs glab" style="left:25px;top:301px;">Location</div>
<div class="abs" style="left:70px;top:307px;width:214px;height:2px;background:#6c6c6e;border-radius:1px"></div>
<div class="gbtn" style="left:21px;top:92px"><svg class="abs" style="left:9px;top:9px;width:36px;height:36px" viewBox="0 0 36 36"><rect x="1" y="1" width="34" height="33" rx="1.500" fill="#555558" stroke="#ececec" stroke-width="1.600"/><path d="M9 13h21l-5 10H4z" stroke="#f08a3c" stroke-width="1.600" fill="none"/></svg></div>
<div class="abs glab" style="left:8px;width:80px;text-align:center;top:149px;">Flatness</div>
<div class="gbtn" style="left:88px;top:92px"><svg class="abs" style="left:9px;top:9px;width:36px;height:36px" viewBox="0 0 36 36"><rect x="1" y="1" width="34" height="33" rx="1.500" fill="#555558" stroke="#ececec" stroke-width="1.600"/><circle cx="17" cy="17.500" r="6.500" stroke="#f08a3c" stroke-width="1.600" fill="none"/><path d="M5 25l8-13M22 23l9-14" stroke="#f08a3c" stroke-width="1.600" fill="none"/></svg></div>
<div class="abs glab" style="left:75px;width:80px;text-align:center;top:149px;">Cylindricity</div>
<div class="gbtn" style="left:156px;top:92px"><svg class="abs" style="left:9px;top:9px;width:36px;height:36px" viewBox="0 0 36 36"><rect x="1" y="1" width="34" height="33" rx="1.500" fill="#555558" stroke="#ececec" stroke-width="1.600"/><path d="M9 18h18" stroke="#f08a3c" stroke-width="1.600" fill="none"/></svg></div>
<div class="abs glab" style="left:143px;width:80px;text-align:center;top:149px;">Straightness</div>
<div class="gbtn" style="left:223px;top:92px"><svg class="abs" style="left:9px;top:9px;width:36px;height:36px" viewBox="0 0 36 36"><rect x="1" y="1" width="34" height="33" rx="1.500" fill="#555558" stroke="#ececec" stroke-width="1.600"/><circle cx="18" cy="17" r="9.500" stroke="#f08a3c" stroke-width="1.600" fill="none"/></svg></div>
<div class="abs glab" style="left:210px;width:80px;text-align:center;top:149px;">Roundness</div>
<div class="gbtn" style="left:21px;top:211px"><svg class="abs" style="left:9px;top:9px;width:36px;height:36px" viewBox="0 0 36 36"><rect x="1" y="1" width="34" height="33" rx="1.500" fill="#555558" stroke="#ececec" stroke-width="1.600"/><path d="M9 26l8-15M17 26l8-15" stroke="#f08a3c" stroke-width="1.600" fill="none" stroke-width="2"/></svg></div>
<div class="abs glab" style="left:8px;width:80px;text-align:center;top:268px;">Parallelism</div>
<div class="gbtn" style="left:88px;top:211px"><svg class="abs" style="left:9px;top:9px;width:36px;height:36px" viewBox="0 0 36 36"><rect x="1" y="1" width="34" height="33" rx="1.500" fill="#555558" stroke="#ececec" stroke-width="1.600"/><path d="M18 10v15M10 25h17" stroke="#f08a3c" stroke-width="1.600" fill="none"/></svg></div>
<div class="abs glab" style="left:75px;width:80px;text-align:center;top:268px;">Perp.</div>
<div class="gbtn" style="left:156px;top:211px"><svg class="abs" style="left:9px;top:9px;width:36px;height:36px" viewBox="0 0 36 36"><rect x="1" y="1" width="34" height="33" rx="1.500" fill="#555558" stroke="#ececec" stroke-width="1.600"/><path d="M7 25h22M7 25l18-13" stroke="#f08a3c" stroke-width="1.600" fill="none"/></svg></div>
<div class="abs glab" style="left:143px;width:80px;text-align:center;top:268px;">Angularity</div>
<div class="gbtn" style="left:21px;top:322px"><svg class="abs" style="left:9px;top:9px;width:36px;height:36px" viewBox="0 0 36 36"><rect x="1" y="1" width="34" height="33" rx="1.500" fill="#555558" stroke="#ececec" stroke-width="1.600"/><circle cx="18" cy="18" r="8" stroke="#f08a3c" stroke-width="1.600" fill="none"/><path d="M18 7v22M7 18h22" stroke="#f08a3c" stroke-width="1.600" fill="none"/></svg></div>
<div class="abs glab" style="left:8px;width:80px;text-align:center;top:379px;">Position</div>
<div class="gbtn" style="left:88px;top:322px"><svg class="abs" style="left:9px;top:9px;width:36px;height:36px" viewBox="0 0 36 36"><rect x="1" y="1" width="34" height="33" rx="1.500" fill="#555558" stroke="#ececec" stroke-width="1.600"/><circle cx="18" cy="18" r="9.500" stroke="#f08a3c" stroke-width="1.600" fill="none"/><circle cx="18" cy="18" r="4" stroke="#f08a3c" stroke-width="1.600" fill="none"/></svg></div>
<div class="abs glab" style="left:75px;width:80px;text-align:center;top:379px;">Concentricity</div>
<div class="gbtn" style="left:156px;top:322px"><svg class="abs" style="left:9px;top:9px;width:36px;height:36px" viewBox="0 0 36 36"><rect x="1" y="1" width="34" height="33" rx="1.500" fill="#555558" stroke="#ececec" stroke-width="1.600"/><circle cx="17" cy="18" r="9.500" stroke="#f08a3c" stroke-width="1.600" fill="none"/><circle cx="17" cy="18" r="4" stroke="#f08a3c" stroke-width="1.600" fill="none"/></svg></div>
<div class="abs glab" style="left:143px;width:80px;text-align:center;top:379px;">Coaxiality</div>
<div class="gbtn" style="left:223px;top:322px"><svg class="abs" style="left:9px;top:9px;width:36px;height:36px" viewBox="0 0 36 36"><rect x="1" y="1" width="34" height="33" rx="1.500" fill="#555558" stroke="#ececec" stroke-width="1.600"/><path d="M9 11h17M7 18h22M9 25h17" stroke="#f08a3c" stroke-width="1.600" fill="none"/></svg></div>
<div class="abs glab" style="left:210px;width:80px;text-align:center;top:379px;">Symmetry</div>
<div class="abs" style="left:5px;top:534px;width:296px;height:200px;background:#000;border-radius:5px 5px 0 0"></div>
<div class="abs phead" style="left:6px;top:535px;width:294px;height:25px;border-radius:4px 4px 0 0;line-height:22px;padding-left:9px">Element Information</div>
<div class="abs" style="left:6px;top:560px;width:294px;height:18px;background:linear-gradient(#48484a,#38383a);border-bottom:1px solid #8a8a8c"></div>
<div class="abs" style="left:24px;top:560px;width:1px;height:17px;background:#8a8a8c"></div>
<div class="abs" style="left:79px;top:560px;width:1px;height:17px;background:#8a8a8c"></div>
<div class="abs" style="left:134px;top:560px;width:1px;height:17px;background:#8a8a8c"></div>
<div class="abs" style="left:184px;top:560px;width:1px;height:17px;background:#8a8a8c"></div>
<div class="abs" style="left:239px;top:560px;width:1px;height:17px;background:#8a8a8c"></div>
<div class="abs" style="left:294px;top:560px;width:1px;height:17px;background:#8a8a8c"></div>
<div class="abs glab" style="left:29px;top:562px;color:#e8e8e8">Elemen...</div>
<div class="abs glab" style="left:84px;top:562px;color:#e8e8e8">Item</div>
<div class="abs glab" style="left:140px;top:562px;color:#e8e8e8">Target...</div>
<div class="abs glab" style="left:189px;top:562px;color:#e8e8e8">Datum</div>
<div class="abs glab" style="left:244px;top:562px;color:#e8e8e8">Value</div>
<div class="abs" style="left:6px;top:578px;width:294px;height:132px;background:#3c3c3e"></div>
<div class="abs" style="left:6px;top:710px;width:294px;height:1px;background:#8a8a8c"></div>
<div class="abs" style="left:6px;top:711px;width:294px;height:22px;background:#535355"></div>
<div class="abs" style="left:18px;top:719px;width:9px;height:9px;background:#f4f4f4"></div>
<div class="abs glab" style="left:32px;top:717px;color:#f0f0f0">Display only selected elements.</div></div>
<div class="abs" style="left:0;top:862px;width:1600px;height:4px;background:#96969a"></div>
<!-- TASKBAR -->
<div id="taskbar" class="abs">
<svg class="abs" style="left:13px;top:9px;width:15px;height:15px" viewBox="0 0 15 15"><path d="M0 2.200L6.500 1.200V7H0zM7.500 1L15 0v7H7.500zM0 8h6.500v5.800L0 12.800zM7.500 8H15v7l-7.500-1z" fill="#fff"/></svg>
<div class="abs" style="left:40px;top:1px;width:240px;height:33px;background:#f2f2f2;overflow:hidden">
  <svg class="abs" style="left:9px;top:8px;width:16px;height:17px" viewBox="0 0 16 17"><circle cx="10" cy="6" r="4.600" stroke="#333" stroke-width="1.400" fill="none"/><path d="M6.800 9.500L1 16" stroke="#333" stroke-width="1.600"/></svg>
  <div class="abs" style="left:33px;top:9px;font-size:12.2px;color:#4a4a4a;line-height:15px;white-space:nowrap">Type here to search</div>
  <svg class="abs" style="left:176px;top:6px;width:64px;height:27px" viewBox="0 0 64 27">
    <path d="M0 27C4 12 14 14 22 16s20 2 42-2v13z" fill="#1d3a6a"/>
    <path d="M10 18c8-4 18 0 28 0s18-3 26-3v4c-10 1-18 4-28 4s-18-2-26-5z" fill="#e8dcc8"/>
    <path d="M2 27c4-6 14-8 28-6s24 2 34 0v6z" fill="#2a9aa4"/>
    <path d="M4 12L22 2l20 9L56 2l8 4" stroke="#8a3a20" stroke-width="1.200" fill="none"/>
    <path d="M4 13h60" stroke="#8a3a20" stroke-width="1.600"/>
    <path d="M22 1v20M56 1v20" stroke="#7a3018" stroke-width="2"/>
    <path d="M8 10v3M12 8v5M16 6v7M28 5v8M32 7v6M36 9v4M42 11v2M46 8v5M50 5v8M60 4v9" stroke="#8a3a20" stroke-width="0.700"/>
  </svg>
</div>
<!-- task view -->
<svg class="abs" style="left:292px;top:9px;width:17px;height:16px" viewBox="0 0 17 16"><path d="M1 1h11M1 15h11M2 4h9v8H2zM14.500 1v3M14.500 7v8" stroke="#fff" stroke-width="1.300" fill="none"/><circle cx="14.500" cy="5.300" r="1.200" fill="#fff"/></svg>
<!-- edge -->
<svg class="abs" style="left:331px;top:6px;width:22px;height:22px" viewBox="0 0 22 22"><defs><linearGradient id="eg" x1="0" y1="0" x2="1" y2="1"><stop offset="0" stop-color="#35c1f1"/><stop offset=".5" stop-color="#1b9de2"/><stop offset="1" stop-color="#0c59a4"/></linearGradient></defs><circle cx="11" cy="11" r="10.500" fill="url(#eg)"/><path d="M3 16c-2-7 3-13 9-13 5 0 9 3 9 8 0 3-2 5-5 5-2 0-3-1-3-2 1-1 1-3 0-4-2-2-6-1-7 2-1 2 0 5 2 7-2 0-4-1-5-3z" fill="#4ee39a" opacity=".85"/><path d="M6 13c1-3 5-4 7-2 1 1 1 3 0 4 0 1 1 2 3 2-1 3-4 4-6 4-3-1-5-4-4-8z" fill="#0c4f96"/></svg>
<!-- explorer -->
<svg class="abs" style="left:373px;top:8px;width:21px;height:18px" viewBox="0 0 21 18"><path d="M0 1h8l1.500 2H21v15H0z" fill="#f7c948"/><path d="M0 5h21v13H0z" fill="#fbdc6e"/><rect x="2.500" y="9" width="16" height="9" fill="#3a96dd"/><rect x="7" y="12" width="7" height="2.500" fill="#fbdc6e"/></svg>
<!-- store -->
<svg class="abs" style="left:413px;top:6px;width:21px;height:22px" viewBox="0 0 21 22"><path d="M6.500 5V2.500a1.500 1.500 0 011.500-1.500h5a1.500 1.500 0 011.500 1.500V5" stroke="#39a0e8" stroke-width="1.600" fill="none"/><rect x="1" y="5" width="19" height="16" rx="2" fill="#f2f2f2"/><rect x="6" y="9" width="4" height="4" fill="#f25022"/><rect x="11" y="9" width="4" height="4" fill="#7fba00"/><rect x="6" y="14" width="4" height="4" fill="#00a4ef"/><rect x="11" y="14" width="4" height="4" fill="#ffb900"/></svg>
<!-- mail -->
<svg class="abs" style="left:454px;top:7px;width:22px;height:20px" viewBox="0 0 22 20"><path d="M0 7L11 0l11 7v13H0z" fill="#1b8de0"/><path d="M2 7h18v8H2z" fill="#f4f8fc"/><path d="M0 7l11 8 11-8v13H0z" fill="#35a9f0"/><path d="M0 20l11-9 11 9z" fill="#1b8de0"/></svg>
<!-- photo card -->
<svg class="abs" style="left:496px;top:10px;width:20px;height:14px" viewBox="0 0 20 14"><rect width="20" height="14" fill="#3a9ad8"/><rect x="1.500" y="1.500" width="17" height="11" fill="#8fd0f0"/><circle cx="6" cy="6" r="2.500" fill="#fff"/><path d="M11 4h6M11 7h6M3 10h14" stroke="#2a7ab8" stroke-width="1.200"/></svg>
<!-- paint -->
<svg class="abs" style="left:535px;top:6px;width:22px;height:22px" viewBox="0 0 22 22"><path d="M11 4c-6 0-10 4-10 9 0 4 3 7 8 7 2 0 2-2 1-3s0-3 2-3h4c3 0 5-2 5-4 0-4-4-6-10-6z" fill="#d8d0c0"/><circle cx="6" cy="10" r="1.600" fill="#e04040"/><circle cx="10" cy="7.500" r="1.600" fill="#40a0e0"/><circle cx="15" cy="8" r="1.600" fill="#40c060"/><circle cx="6" cy="15" r="1.600" fill="#e0b030"/><path d="M12 13L20 1l1.500 1-7 12z" fill="#c89040"/></svg>
<!-- active app -->
<div class="abs" style="left:568px;top:0;width:39px;height:34px;background:#465170"></div>
<div class="abs" style="left:568px;top:32px;width:39px;height:2px;background:#8ab4e8"></div>
<svg class="abs" style="left:576px;top:6px;width:24px;height:22px" viewBox="0 0 24 22"><path d="M3 1h10l4 4v10H3z" fill="#e8e8e8"/><path d="M4 12l6-3 4-6 3 2-5 6-1 5-7 1z" fill="#222"/><rect x="11" y="12" width="12" height="9" fill="#2a80d0"/><text x="12" y="19.500" font-size="6.500" font-family="Liberation Sans" fill="#bfe0ff" font-weight="bold">ViD</text></svg>
<!-- right -->
<svg class="abs" style="left:1294px;top:10px;width:20px;height:15px" viewBox="0 0 20 15"><rect x=".700" y=".700" width="16" height="13.500" rx="1.500" stroke="#fff" stroke-width="1.300" fill="none"/><path d="M17 3h2v9.500a1.500 1.500 0 01-1.500 1.500" stroke="#fff" stroke-width="1.300" fill="none"/><path d="M3 4h11M10 7.500h4M10 10.500h4" stroke="#fff" stroke-width="1.300"/><rect x="3.300" y="7" width="4.500" height="4" stroke="#fff" stroke-width="1.200" fill="none"/></svg>
<div class="abs tkt" style="left:1320px;top:11px;font-size:11.500px">47&deg;F&nbsp;&nbsp;Clear</div>
<svg class="abs" style="left:1396px;top:13px;width:12px;height:8px" viewBox="0 0 12 8"><path d="M1 7l5-5.500L11 7" stroke="#fff" stroke-width="1.300" fill="none"/></svg>
<svg class="abs" style="left:1416px;top:9px;width:13px;height:16px" viewBox="0 0 13 16"><path d="M3 1.500h6" stroke="#fff" stroke-width="1.100"/><rect x="1" y="4" width="8" height="8" rx="1.500" stroke="#fff" stroke-width="1.200" fill="none"/><rect x="3.500" y="6.500" width="3" height="3" fill="#fff"/><path d="M9.500 7l2.500-1.500v5L9.500 9M3 14.500h6" stroke="#fff" stroke-width="1.100" fill="none"/></svg>
<svg class="abs" style="left:1435px;top:9px;width:15px;height:15px" viewBox="0 0 15 15"><circle cx="7" cy="7" r="6.300" stroke="#fff" stroke-width="1.200" fill="none"/><ellipse cx="7" cy="7" rx="3" ry="6.300" stroke="#fff" stroke-width="1" fill="none"/><path d="M1 5h12M1 9.500h12" stroke="#fff" stroke-width="1"/><circle cx="11.500" cy="11.500" r="3" fill="#1c2d4e" stroke="#fff" stroke-width="1"/></svg>
<svg class="abs" style="left:1455px;top:10px;width:15px;height:14px" viewBox="0 0 15 14"><path d="M1 5h2.500L7 1.500v11L3.500 9H1z" stroke="#fff" stroke-width="1.100" fill="none"/><path d="M9 4.500c1 1.500 1 3.500 0 5M11 2.500c2 2.500 2 6.500 0 9M13 1c2.500 3.500 2.500 8.500 0 12" stroke="#fff" stroke-width="1" fill="none"/></svg>
<div class="abs tkt" style="left:1477px;top:11px;font-size:10px">ENG</div>
<div class="abs tkt" style="left:1508px;top:3px;font-size:10px;width:42px;text-align:center">11:31 AM</div>
<div class="abs tkt" style="left:1505px;top:18px;font-size:10px;width:47px;text-align:center">4/25/2024</div>
<svg class="abs" style="left:1565px;top:10px;width:15px;height:15px" viewBox="0 0 15 15"><path d="M1 1h13v10H9.500L7.500 13 5.500 11H1z" stroke="#fff" stroke-width="1.200" fill="none"/></svg>
<div class="abs" style="left:1595px;top:0;width:1px;height:34px;background:#6a7890"></div>
</div>
</body>
</html>
